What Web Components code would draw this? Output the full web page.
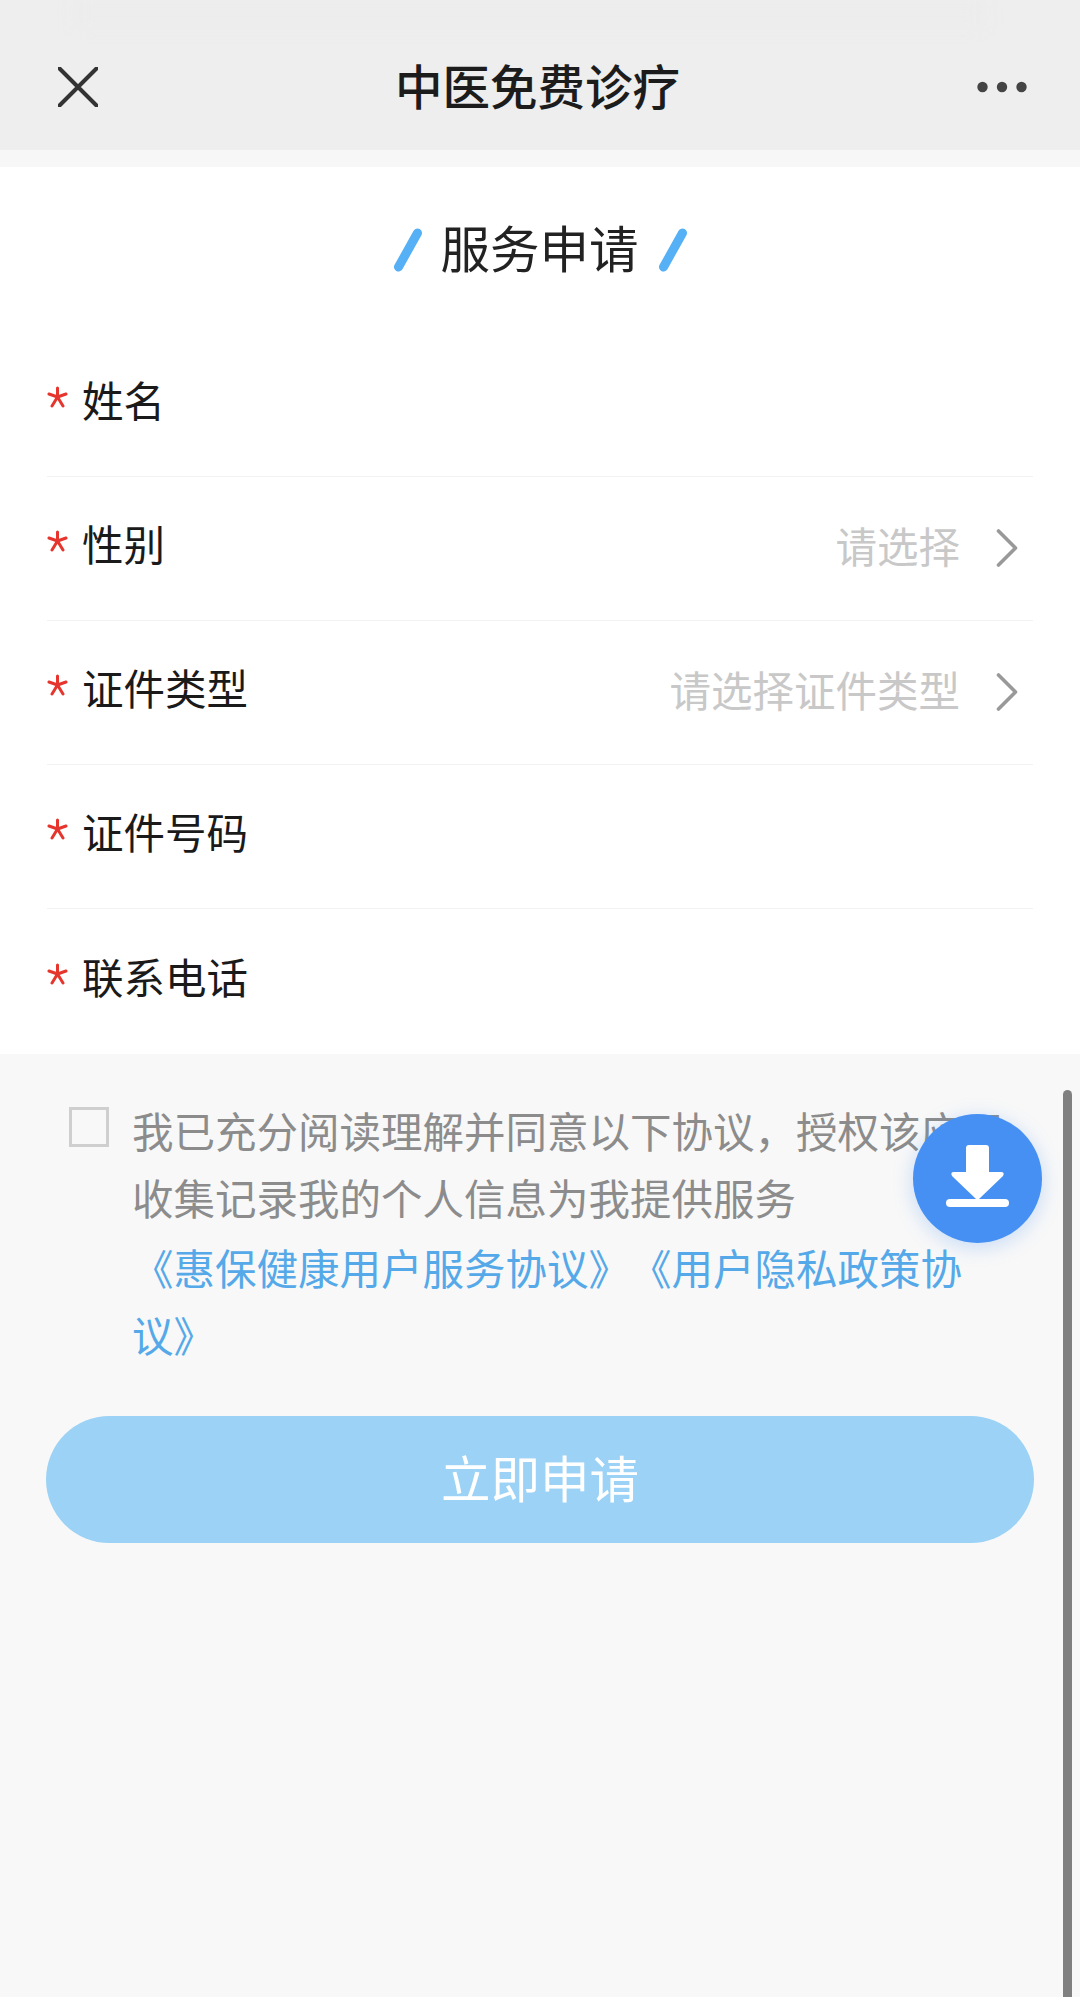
<!DOCTYPE html>
<html lang="zh">
<head>
<meta charset="utf-8">
<title>中医免费诊疗</title>
<style>
  html, body { margin: 0; padding: 0; }
  body {
    width: 1080px;
    height: 1997px;
    overflow: hidden;
    position: relative;
    background: #f8f8f8;
    font-family: "Noto Sans CJK SC", "Liberation Sans", sans-serif;
  }
  .form { display: block; background: #fff; }
</style>
</head>
<body>
  <nav-bar>中医免费诊疗</nav-bar>
  <div class="form">
    <section-title>服务申请</section-title>
    <form-row label="姓名"></form-row>
    <form-row label="性别" placeholder="请选择" arrow></form-row>
    <form-row label="证件类型" placeholder="请选择证件类型" arrow></form-row>
    <form-row label="证件号码"></form-row>
    <form-row label="联系电话" last></form-row>
  </div>
  <agree-box>
    我已充分阅读理解并同意以下协议，授权该应用收集记录我的个人信息为我提供服务
    <span slot="links">《惠保健康用户服务协议》《用户隐私政策协议》</span>
  </agree-box>
  <submit-button>立即申请</submit-button>
  <download-fab></download-fab>
  <scroll-thumb></scroll-thumb>

<script>
class NavBar extends HTMLElement {
  connectedCallback() {
    this.attachShadow({ mode: 'open' });
    this.shadowRoot.innerHTML = `
      <style>
        :host {
          display: block;
          background: #eeeeee;
          border-bottom: 17px solid #f7f7f7;
          position: relative;
        }
        .smear {
          position: absolute;
          left: 75px;
          right: 95px;
          top: 0;
          height: 26px;
          background: #ececec;
          filter: blur(8px);
        }
        .bar {
          position: relative;
          height: 126px;
          padding: 24px 53px 0 58px;
          display: flex;
          justify-content: space-between;
          align-items: center;
        }
        .title {
          font-size: 47.5px;
          line-height: 60px;
          font-weight: 500;
          color: #1c1c1c;
          margin-top: -5px;
        }
        svg { display: block; }
      </style>
      <div class="smear"></div>
      <div class="bar">
        <svg width="40" height="40" viewBox="0 0 40 40" fill="none" stroke="#333" stroke-width="4" stroke-linecap="round">
          <path d="M1.5 1.5 L38.5 38.5 M38.5 1.5 L1.5 38.5"/>
        </svg>
        <span class="title"><slot></slot></span>
        <svg width="50" height="12" viewBox="0 0 50 12" fill="#444">
          <circle cx="5.5" cy="6" r="5.2"/><circle cx="25" cy="6" r="5.2"/><circle cx="44.5" cy="6" r="5.2"/>
        </svg>
      </div>
    `;
  }
}
customElements.define('nav-bar', NavBar);

class SectionTitle extends HTMLElement {
  connectedCallback() {
    this.attachShadow({ mode: 'open' });
    const slash = `<svg width="30" height="44" viewBox="0 0 30 44" fill="none" stroke="#55b0f5" stroke-width="9" stroke-linecap="round"><path d="M24.5 5 L5.5 39"/></svg>`;
    this.shadowRoot.innerHTML = `
      <style>
        :host {
          display: flex;
          justify-content: center;
          align-items: center;
          gap: 18px;
          height: 166px;
          box-sizing: border-box;
        }
        .text {
          font-size: 49.5px;
          line-height: 60px;
          color: #222;
          font-weight: 400;
          margin-top: -6px;
          padding-right: 1px;
        }
        svg { display: block; }
      </style>
      ${slash}<span class="text"><slot></slot></span>${slash}
    `;
  }
}
customElements.define('section-title', SectionTitle);

class FormRow extends HTMLElement {
  connectedCallback() {
    this.attachShadow({ mode: 'open' });
    const placeholder = this.getAttribute('placeholder');
    const arrow = this.hasAttribute('arrow');
    this.shadowRoot.innerHTML = `
      <style>
        :host {
          display: block;
          margin: 0 47px;
          height: 144px;
          box-sizing: border-box;
          border-bottom: 1px solid #f2f2f2;
        }
        :host([last]) { border-bottom: 0; height: 145px; }
        .row {
          height: 100%;
          display: flex;
          align-items: center;
          padding-bottom: 5px;
          box-sizing: border-box;
        }
        .star {
          width: 35px;
          flex: none;
          display: block;
          margin-top: -10px;
        }
        .label {
          font-size: 41.5px;
          line-height: 56px;
          color: #1a1a1a;
          margin-top: -7px;
        }
        .value {
          margin-left: auto;
          font-size: 41.5px;
          line-height: 56px;
          color: #c8c8c8;
          margin-top: -3px;
        }
        .arrow { display: block; margin: 3px 15px 0 36px; }
      </style>
      <div class="row">
        <svg class="star" height="22" viewBox="0 0 35 22" fill="none" stroke="#e5352d" stroke-width="3" stroke-linecap="round">
          <path d="M10.500 11 V2 M10.500 11 L2 8 M10.500 11 L19 8 M10.500 11 L5 20 M10.500 11 L16 20"/>
        </svg>
        <span class="label">${this.getAttribute('label')}</span>
        ${placeholder ? `<span class="value">${placeholder}</span>` : ''}
        ${arrow ? `<svg class="arrow" width="22" height="38" viewBox="0 0 22 38" fill="none" stroke="#999" stroke-width="3.6" stroke-linecap="round" stroke-linejoin="round"><path d="M2.5 2 L19.5 19 L2.5 36"/></svg>` : ''}
      </div>
    `;
  }
}
customElements.define('form-row', FormRow);

class AgreeBox extends HTMLElement {
  connectedCallback() {
    this.attachShadow({ mode: 'open' });
    this.shadowRoot.innerHTML = `
      <style>
        :host {
          display: flex;
          gap: 23px;
          padding: 43px 0 0 69px;
          font-size: 41.5px;
          text-spacing-trim: space-all;
        }
        .box {
          flex: none;
          width: 40px;
          height: 40px;
          margin-top: 10px;
          box-sizing: border-box;
          border: 3px solid #cfcfcf;
        }
        .body { width: 880px; }
        .text { line-height: 66.5px; color: #8c8c8c; }
        .links { line-height: 67px; margin-top: 4px; color: #55a9e8; }
      </style>
      <div class="box"></div>
      <div class="body">
        <div class="text"><slot></slot></div>
        <div class="links"><slot name="links"></slot></div>
      </div>
    `;
  }
}
customElements.define('agree-box', AgreeBox);

class SubmitButton extends HTMLElement {
  connectedCallback() {
    this.attachShadow({ mode: 'open' });
    this.shadowRoot.innerHTML = `
      <style>
        :host {
          display: flex;
          justify-content: center;
          align-items: center;
          height: 127px;
          margin: 48px 46px 0;
          padding-bottom: 5px;
          box-sizing: border-box;
          border-radius: 64px;
          background: #9bd2f5;
          color: #fff;
          font-size: 49.5px;
          line-height: 60px;
        }
      </style>
      <slot></slot>
    `;
  }
}
customElements.define('submit-button', SubmitButton);

class DownloadFab extends HTMLElement {
  connectedCallback() {
    this.attachShadow({ mode: 'open' });
    this.shadowRoot.innerHTML = `
      <style>
        :host {
          position: absolute;
          left: 913px;
          top: 1114px;
          width: 129px;
          height: 129px;
          border-radius: 50%;
          background: #4690f4;
          box-shadow: 0 4px 20px rgba(70, 144, 244, 0.28);
          display: block;
        }
        svg { display: block; }
      </style>
      <svg width="129" height="129" viewBox="0 0 129 129" fill="#fff">
        <path d="M53 34 Q53 31 56 31 H73 Q76 31 76 34 V58 H88 Q92 58 90 62 L67 84 Q64.500 87 62 84 L39 62 Q37 58 41 58 H53 Z"/>
        <rect x="33" y="85" width="63" height="8" rx="4"/>
      </svg>
    `;
  }
}
customElements.define('download-fab', DownloadFab);

class ScrollThumb extends HTMLElement {
  connectedCallback() {
    this.attachShadow({ mode: 'open' });
    this.shadowRoot.innerHTML = `
      <style>
        :host {
          position: absolute;
          left: 1063px;
          top: 1090px;
          width: 9px;
          height: 920px;
          border-radius: 5px;
          background: #808080;
          display: block;
        }
      </style>
    `;
  }
}
customElements.define('scroll-thumb', ScrollThumb);
</script>
</body>
</html>
